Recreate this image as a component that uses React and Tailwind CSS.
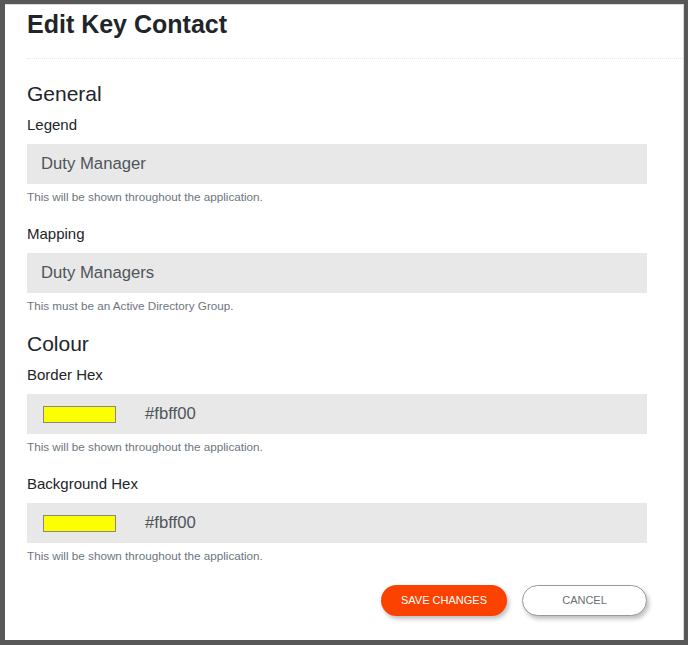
const fields = [
  {
    section: "General",
    items: [
      { label: "Legend", value: "Duty Manager", help: "This will be shown throughout the application." },
      { label: "Mapping", value: "Duty Managers", help: "This must be an Active Directory Group." },
    ],
  },
  {
    section: "Colour",
    items: [
      { label: "Border Hex", value: "#fbff00", swatch: "#fbff00", help: "This will be shown throughout the application." },
      { label: "Background Hex", value: "#fbff00", swatch: "#fbff00", help: "This will be shown throughout the application." },
    ],
  },
];

function Field({ label, value, swatch, help, first }) {
  return (
    <div className={first ? "" : "mt-[21px]"}>
      <label className="block text-[15px] leading-[18px] text-[#212529]">{label}</label>
      <div className="mt-[10px] flex h-[40px] items-center bg-[#e8e8e8] pl-[14px]">
        {swatch ? (
          <>
            <span
              className="ml-[2px] block h-[17px] w-[73px] border border-[#8a8a7a]"
              style={{ backgroundColor: swatch }}
            />
            <span className="ml-[29px] text-[16.7px] text-[#4e555b]">{value}</span>
          </>
        ) : (
          <span className="text-[16.7px] text-[#4e555b]">{value}</span>
        )}
      </div>
      <p className="mt-[6px] text-[11.7px] leading-[14px] text-[#6c757d]">{help}</p>
    </div>
  );
}

export default function App() {
  return (
    <div
      className="h-[645px] w-[688px] bg-[#585858] pb-[5px] pl-[5px] pr-[4px] pt-[4px]"
      style={{ fontFamily: '"Liberation Sans", Arial, sans-serif' }}
    >
      <div className="h-full border-r border-t border-[#d9d9d9] bg-white pl-[22px]">
        <div className="border-b border-dotted border-[#e6e6e6] pb-[21px] pt-[7px]">
          <h1 className="text-[25px] font-bold leading-[25px] text-[#212529]">Edit Key Contact</h1>
        </div>

        <div className="pr-[36px]">
          {fields.map((group, gi) => (
            <section key={group.section} className={gi === 0 ? "mt-[23px]" : "mt-[19px]"}>
              <h2 className="mb-[10px] text-[21px] leading-[24px] text-[#212529]">{group.section}</h2>
              {group.items.map((item, i) => (
                <Field key={item.label} {...item} first={i === 0} />
              ))}
            </section>
          ))}

          <div className="mt-[22px] flex justify-end gap-[15px]">
            <button
              type="button"
              className="h-[31px] w-[126px] rounded-full bg-[#fb4200] text-[11px] text-white shadow-[2px_3px_4px_rgba(0,0,0,0.25)]"
            >
              SAVE CHANGES
            </button>
            <button
              type="button"
              className="h-[31px] w-[125px] rounded-full border border-[#9a9a9a] bg-white text-[11px] text-[#6b6f73] shadow-[2px_3px_4px_rgba(0,0,0,0.25)]"
            >
              CANCEL
            </button>
          </div>
        </div>
      </div>
    </div>
  );
}
